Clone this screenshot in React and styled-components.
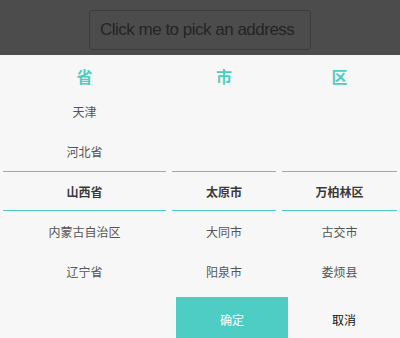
import styled, { createGlobalStyle } from "styled-components";

const GlobalStyle = createGlobalStyle`
  html, body {
    margin: 0;
    padding: 0;
    background: #fff;
    font-family: "Liberation Sans", "Noto Sans CJK SC", sans-serif;
  }
`;

const TEAL = "#4ecdc4";

const columns = [
  { title: "省", rows: ["天津", "河北省", "山西省", "内蒙古自治区", "辽宁省"] },
  { title: "市", rows: ["", "", "太原市", "大同市", "阳泉市"] },
  { title: "区", rows: ["", "", "万柏林区", "古交市", "娄烦县"] },
];

const SELECTED = 2;

const App = () => {
  return (
    <>
      <GlobalStyle />
      <Page>
        <AddressInput placeholder="Click me to pick an address" readOnly />
      </Page>
      <Mask />
      <Sheet>
        <Grid>
          {columns.map((col) => (
            <Column key={col.title}>
              <Heading>{col.title}</Heading>
              {col.rows.map((row, idx) => (
                <Row key={idx} $selected={idx === SELECTED}>
                  {row}
                </Row>
              ))}
            </Column>
          ))}
        </Grid>
        <Footer>
          <Button $primary>确定</Button>
          <Button>取消</Button>
        </Footer>
      </Sheet>
    </>
  );
};

export default App;

const Page = styled.div`
  display: flex;
  justify-content: center;
  padding-top: 10px;
  height: 338px;
  box-sizing: border-box;
`;

const AddressInput = styled.input`
  width: 222px;
  height: 40px;
  box-sizing: border-box;
  border: 1px solid #c8c8c8;
  border-radius: 3px;
  padding: 0 10px;
  font-family: "Liberation Sans", Arial, sans-serif;
  font-size: 17px;
  letter-spacing: -0.5px;
  background: #fff;
  outline: none;

  &::placeholder {
    color: #7a7a7a;
  }
`;

const Mask = styled.div`
  position: fixed;
  inset: 0;
  background: rgba(0, 0, 0, 0.7);
`;

const Sheet = styled.div`
  position: fixed;
  left: 0;
  right: 0;
  top: 55px;
  bottom: 0;
  background: #f7f7f7;
  font-family: "Noto Sans CJK SC", "Liberation Sans", sans-serif;
  overflow: hidden;
`;

const Grid = styled.div`
  display: grid;
  grid-template-columns: 169px 110px 1fr;
`;

const Column = styled.div`
  display: flex;
  flex-direction: column;
  padding: 0 3px;
`;

const Heading = styled.div`
  height: 36px;
  display: flex;
  align-items: center;
  justify-content: center;
  color: ${TEAL};
  font-size: 16px;
  font-weight: 700;
  padding-top: 6px;
  box-sizing: border-box;
`;

const Row = styled.div`
  height: 40px;
  box-sizing: border-box;
  display: flex;
  align-items: center;
  justify-content: center;
  font-size: 12px;
  color: ${(p) => (p.$selected ? "#3a3a3a" : "#555")};
  font-weight: ${(p) => (p.$selected ? 700 : 400)};
  border-top: 1px solid ${(p) => (p.$selected ? TEAL : "transparent")};
  border-bottom: 1px solid ${(p) => (p.$selected ? TEAL : "transparent")};
`;

const Footer = styled.div`
  display: flex;
  justify-content: flex-end;
  margin-top: 6px;
`;

const Button = styled.div`
  width: 112px;
  height: 44px;
  display: flex;
  align-items: center;
  justify-content: center;
  font-size: 12px;
  background: ${(p) => (p.$primary ? TEAL : "transparent")};
  color: ${(p) => (p.$primary ? "#fff" : "#111")};
`;
